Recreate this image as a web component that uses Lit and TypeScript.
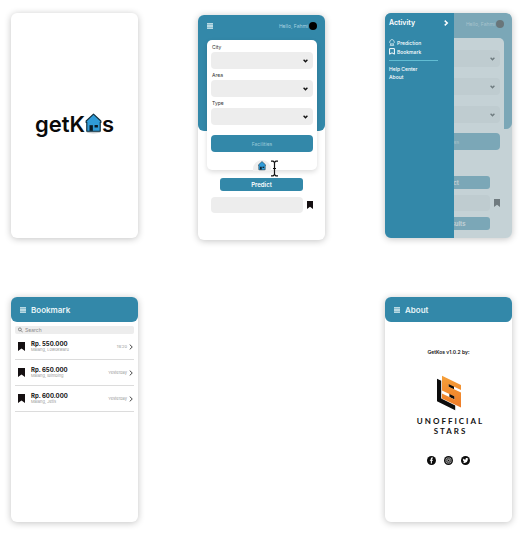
import { LitElement, html, svg, css } from "lit";
import { customElement, property } from "lit/decorators.js";

const base = css`
  :host {
    --blue: #3388a9;
    --field: #ededed;
    font-family: "Inter", "Liberation Sans", sans-serif;
    color: #111;
  }
  * {
    box-sizing: border-box;
  }
  button,
  input,
  select {
    font: inherit;
    border: 0;
    margin: 0;
    padding: 0;
    background: none;
    color: inherit;
    text-align: inherit;
  }
  a {
    color: inherit;
    text-decoration: none;
  }
  svg {
    display: block;
    flex: none;
  }
  h1,
  h2,
  p,
  ul {
    margin: 0;
    padding: 0;
    font-weight: 400;
    list-style: none;
  }
`;

const menuIcon = html`<svg width="6" height="6" viewBox="0 0 6 6" aria-hidden="true">
  <path d="M0 .8H6M0 3H6M0 5.2H6" stroke="#e6f3f6" stroke-width="1.3" />
</svg>`;

const chevron = (size: number, color: string, width: number) => html`<svg
  width=${size} height=${size} viewBox="0 0 8 8" aria-hidden="true">
  <path d="M2.3 .8L5.7 4L2.3 7.2" fill="none" stroke=${color} stroke-width=${width} />
</svg>`;

const bookmark = (w: number, h: number) => html`<svg
  width=${w} height=${h} viewBox="0 0 6 8" preserveAspectRatio="none" aria-hidden="true">
  <path d="M0 0H6V8L3 5.8L0 8Z" fill="#151012" />
</svg>`;

const house = (w: number, h: number) => html`<svg width=${w} height=${h} viewBox="0 0 16 20" aria-hidden="true">
  ${svg`
    <ellipse cx="8" cy="18" rx="6.5" ry="1.6" fill="#c9cdd0" />
    <path d="M1 7.6L8 1L15 7.6V9H14.4V17.4H1.6V9H1Z" fill="#2f9bd8" stroke="#12303f" stroke-width="1.1" stroke-linejoin="round" />
    <path d="M4.2 11.6H7.4V17H4.2Z" fill="#0b1a24" />
    <path d="M9 11.4H12.2V13.8H9Z" fill="#0b1a24" />
  `}
</svg>`;

@customElement("search-form")
export class SearchForm extends LitElement {
  @property({ type: Boolean }) results = false;

  static styles = [
    base,
    css`
      :host {
        display: block;
      }
      .hero {
        background: var(--blue);
        border-radius: 6px;
        height: 116px;
        padding: 6px 8px 0 9px;
      }
      .bar {
        display: flex;
        align-items: center;
        height: 10px;
        margin-bottom: 9px;
      }
      .bar button {
        margin-right: auto;
      }
      .hello {
        font-size: 5px;
        line-height: 8px;
        color: #a9d3e0;
        margin-right: 1px;
      }
      .avatar {
        width: 8px;
        height: 8px;
        border-radius: 50%;
        background: #000;
      }
      .panel {
        background: #fff;
        border-radius: 5px;
        padding: 4px 4px 0;
        height: 130px;
        box-shadow: 0 2px 5px rgba(0, 0, 0, 0.14);
        display: flex;
        flex-direction: column;
      }
      .results .panel {
        box-shadow: none;
      }
      .results label {
        visibility: hidden;
      }
      label {
        font-size: 5px;
        line-height: 6px;
        margin: 0 1px 2px;
        color: #333;
      }
      .pick {
        display: grid;
        margin-bottom: 3px;
      }
      .pick > * {
        grid-area: 1 / 1;
      }
      select {
        appearance: none;
        height: 17px;
        border-radius: 4px;
        background: var(--field);
        width: 100%;
        font-size: 5px;
      }
      .pick svg {
        place-self: center end;
        margin-right: 5px;
        pointer-events: none;
      }
      .facilities {
        flex: none;
        height: 17px;
        margin-top: 7px;
        border-radius: 4px;
        background: var(--blue);
        color: #9ccbd9;
        font-size: 5px;
        text-align: center;
      }
      .home {
        flex: none;
        align-self: center;
        display: grid;
        place-items: end center;
        width: 18px;
        height: 11px;
        margin-top: 8px;
        border-radius: 9px 9px 0 0;
        background: #eee;
      }
      .below {
        display: grid;
        grid-template-columns: 1fr 6px;
        align-items: center;
        gap: 6px 4px;
        padding: 47px 12px 0 13px;
      }
      .action {
        margin-left: 9px;
        height: 13px;
        border-radius: 3px;
        background: var(--blue);
        color: #fff;
        font-size: 6px;
        font-weight: 600;
        text-align: center;
        grid-column: 1;
      }
      .out {
        grid-column: 1;
        height: 16px;
        width: 100%;
        min-width: 0;
        border-radius: 4px;
        background: var(--field);
      }
    `,
  ];

  private field(id: string, label: string) {
    return html`<label for=${id}>${label}</label>
      <div class="pick">
        <select id=${id}></select>
        <svg width="5" height="4" viewBox="0 0 5 4" aria-hidden="true">
          <path d="M.6 .8L2.5 2.7L4.4 .8" fill="none" stroke="#111" stroke-width="1.4" />
        </svg>
      </div>`;
  }

  render() {
    return html`<div class=${this.results ? "results" : ""}>
      <div class="hero">
        <div class="bar">
          <button aria-label="Menu">${menuIcon}</button>
          <span class="hello">Hello, Fahmi</span>
          <span class="avatar"></span>
        </div>
        <div class="panel">
          ${this.field("city", "City")} ${this.field("area", "Area")} ${this.field("type", "Type")}
          <button class="facilities">Facilities</button>
          ${this.results ? "" : html`<button class="home" aria-label="Home">${house(8, 10)}</button>`}
        </div>
      </div>
      <div class="below">
        <button class="action">Predict</button>
        <input class="out" aria-label="Prediction" readonly />
        <button aria-label="Bookmark">${bookmark(6, 8)}</button>
        ${this.results ? html`<button class="action">See Results</button>` : ""}
      </div>
    </div>`;
  }
}

@customElement("activity-drawer")
export class ActivityDrawer extends LitElement {
  static styles = [
    base,
    css`
      :host {
        display: block;
        background: var(--blue);
        color: #fff;
        padding: 5px 4px;
      }
      .head {
        display: flex;
        align-items: center;
        justify-content: space-between;
        height: 10px;
        margin-bottom: 10px;
      }
      .head button {
        margin-right: 1px;
      }
      h2 {
        font-size: 7px;
        line-height: 10px;
        font-weight: 600;
      }
      a {
        display: flex;
        align-items: center;
        gap: 2px;
        font-size: 5px;
        line-height: 8px;
        font-weight: 500;
      }
      .main a {
        height: 9px;
      }
      hr {
        border: 0;
        height: 1px;
        margin: 4px 12px 4px 0;
        background: #62bdd3;
      }
    `,
  ];

  render() {
    return html`<div class="head">
        <h2>Activity</h2>
        <button aria-label="Close">${chevron(6, "#fff", 2)}</button>
      </div>
      <ul class="main">
        <li>
          <a href="#prediction"><svg width="6" height="7" viewBox="0 0 6 7" aria-hidden="true">
            <path d="M2 4.8A2.2 2.2 0 1 1 4 4.8M1.2 6.4H4.8L4.2 5H1.8Z" fill="none" stroke="#d9eef4" stroke-width=".8" />
          </svg>Prediction</a>
        </li>
        <li>
          <a href="#bookmark"><svg width="6" height="7" viewBox="0 0 6 7" aria-hidden="true">
            <path d="M.6 .6H5.4V6.2L3 4.8L.6 6.2Z" fill="none" stroke="#fff" stroke-width="1" />
          </svg>Bookmark</a>
        </li>
      </ul>
      <hr />
      <ul>
        <li><a href="#help">Help Center</a></li>
        <li><a href="#about">About</a></li>
      </ul>`;
  }
}

const saved = [
  { price: "Rp. 550.000", place: "Malang, Lowokwaru", when: "19:20" },
  { price: "Rp. 650.000", place: "Malang, Blimbing", when: "Yesterday" },
  { price: "Rp. 600.000", place: "Malang, Jetis", when: "Yesterday" },
];

@customElement("app-root")
export class AppRoot extends LitElement {
  static styles = [
    base,
    css`
      :host {
        display: block;
        min-height: 100vh;
        background: #fff;
      }
      .board {
        display: grid;
        grid-template-columns: repeat(3, minmax(0, 1fr));
        gap: 57px 60px;
        padding: 13px 10px 12px 11px;
      }
      .screen {
        min-height: 225px;
        border-radius: 6px;
        background: #fff;
        box-shadow: 0 1px 7px rgba(0, 0, 0, 0.24);
        align-self: start;
      }
      .form {
        grid-column: 2;
        margin-top: 2px;
        position: relative;
      }
      .cursor {
        position: absolute;
        left: 72px;
        top: 145px;
      }
      .splash {
        display: flex;
        align-items: center;
        justify-content: center;
        padding-bottom: 4px;
      }
      .brand {
        display: flex;
        align-items: center;
        font-size: 22px;
        line-height: 28px;
        font-weight: 600;
        color: #0a0a0a;
      }
      .layers {
        display: grid;
        grid-template-columns: 54% 1fr;
        overflow: hidden;
      }
      .layers > * {
        grid-row: 1;
      }
      .under,
      .veil {
        grid-column: 1 / 3;
      }
      .veil {
        background: rgba(164, 185, 191, 0.64);
        z-index: 1;
      }
      .drawer {
        grid-column: 1;
        z-index: 2;
      }
      .title {
        display: flex;
        align-items: center;
        gap: 5px;
        height: 25px;
        padding: 0 9px;
        border-radius: 6px;
        background: var(--blue);
        color: #e8f5f8;
      }
      h1 {
        font-size: 8px;
        line-height: 10px;
        font-weight: 600;
      }
      .list {
        grid-column: 1;
      }
      .about {
        grid-column: 3;
      }
      .search {
        display: flex;
        align-items: center;
        gap: 2px;
        height: 8px;
        margin: 4px 4px 0;
        padding: 0 3px;
        border-radius: 2px;
        background: var(--field);
      }
      .search input {
        flex: 1;
        min-width: 0;
        height: 8px;
        font-size: 5px;
        line-height: 8px;
        appearance: none;
      }
      .search input::placeholder {
        color: #8a8a8a;
        opacity: 1;
      }
      .rows {
        padding: 0 4px;
      }
      .row {
        display: flex;
        align-items: center;
        height: 26px;
        padding: 0 0 0 3px;
        border-bottom: 1px solid #dcdcdc;
      }
      .info {
        flex: 1;
        margin-left: 6px;
      }
      .price {
        font-size: 6px;
        line-height: 6px;
        font-weight: 700;
      }
      .place,
      .when {
        font-size: 4px;
        line-height: 5px;
        color: #999;
      }
      .when {
        margin-right: 1px;
      }
      .credits {
        display: flex;
        flex-direction: column;
        align-items: center;
        padding-top: 26px;
        text-align: center;
      }
      .version {
        font-size: 5px;
        line-height: 8px;
        font-weight: 600;
        margin-bottom: 19px;
      }
      .team {
        font-family: "Lato", "Inter", sans-serif;
        font-size: 8px;
        line-height: 10px;
        font-weight: 700;
        letter-spacing: 2px;
        padding-left: 4px;
        margin: 5px 0 20px;
      }
      .social {
        display: flex;
        gap: 8px;
      }
    `,
  ];

  private title(text: string) {
    return html`<header class="title">
      <button aria-label="Menu">${menuIcon}</button>
      <h1>${text}</h1>
    </header>`;
  }

  render() {
    return html`<main class="board">
      <section class="screen splash">
        <div class="brand">getK${house(17, 21)}s</div>
      </section>

      <section class="screen form">
        <search-form></search-form>
        <svg class="cursor" width="9" height="17" viewBox="0 0 9 17" aria-hidden="true">
          <path d="M1 1.2H3.2L4.5 2.4L5.8 1.2H8M4.5 2.2V14.8M1 15.8H3.2L4.5 14.6L5.8 15.8H8M3 8.5H6" fill="none" stroke="#111" stroke-width="1.2" />
        </svg>
      </section>

      <section class="screen layers">
        <search-form class="under" results inert></search-form>
        <div class="veil"></div>
        <activity-drawer class="drawer"></activity-drawer>
      </section>

      <section class="screen list">
        ${this.title("Bookmark")}
        <div class="search">
          <svg width="5" height="6" viewBox="0 0 5 6" aria-hidden="true">
            <path d="M3.4 2.4A1.5 1.5 0 1 1 .4 2.4A1.5 1.5 0 1 1 3.4 2.4M3 3.6L4.8 5.4" fill="none" stroke="#666" stroke-width=".7" />
          </svg>
          <input type="search" aria-label="Search" placeholder="Search" />
        </div>
        <ul class="rows">
          ${saved.map(
            (s) => html`<li class="row">
              ${bookmark(7, 9)}
              <div class="info">
                <p class="price">${s.price}</p>
                <p class="place">${s.place}</p>
              </div>
              <span class="when">${s.when}</span>
              ${chevron(6, "#444", 1.3)}
            </li>`
          )}
        </ul>
      </section>

      <section class="screen about">
        ${this.title("About")}
        <div class="credits">
          <p class="version">GetKos v1.0.2 by:</p>
          <svg width="26" height="36" viewBox="0 0 26 36" role="img" aria-label="Unofficial Stars logo">
            <defs>
              <linearGradient id="amber" x1="0" y1="0" x2="0" y2="1">
                <stop offset="0" stop-color="#f5a03a" />
                <stop offset="1" stop-color="#ee7a26" />
              </linearGradient>
            </defs>
            <path d="M1 3.8L5.2 5.8V23.6L19.2 30.4V35.2L1 26.2Z" fill="#0c0c0c" />
            <path d="M12.4 8L18 10.6V14.6L12.4 12Z M13.4 18L18.6 20.4V24.6L13.4 22Z" fill="#0c0c0c" />
            <path d="M6 .8L25 10V15L12.4 9V11.6L25 17.6V32.6L6 23.4V18.6L18.6 24.6V21.4L6 15.4Z" fill="url(#amber)" />
          </svg>
          <p class="team">UNOFFICIAL<br />STARS</p>
          <nav class="social">
            <a href="#facebook" aria-label="Facebook"><svg width="9" height="9" viewBox="0 0 18 18">
              <circle cx="9" cy="9" r="9" fill="#0c0c0c" />
              <path d="M9.8 15V9.6H11.7L12 7.4H9.8V6.2C9.8 5.5 10.1 5.1 11 5.1H12V3.2C11.7 3.1 11.1 3 10.4 3C8.7 3 7.6 4 7.6 5.8V7.4H5.8V9.6H7.6V15Z" fill="#fff" />
            </svg></a>
            <a href="#instagram" aria-label="Instagram"><svg width="9" height="9" viewBox="0 0 18 18">
              <circle cx="9" cy="9" r="9" fill="#0c0c0c" />
              <rect x="4" y="4" width="10" height="10" rx="3" fill="none" stroke="#fff" stroke-width="1.3" />
              <circle cx="9" cy="9" r="2.4" fill="none" stroke="#fff" stroke-width="1.3" />
              <circle cx="11.9" cy="6.1" r=".8" fill="#fff" />
            </svg></a>
            <a href="#twitter" aria-label="Twitter"><svg width="9" height="9" viewBox="0 0 18 18">
              <circle cx="9" cy="9" r="9" fill="#0c0c0c" />
              <path d="M14.6 6L13.4 7.1C13.5 11 10.6 13.8 7.2 13.8C5.8 13.8 4.5 13.4 3.5 12.7C4.8 12.8 5.9 12.5 6.8 11.8C5.7 11.7 5 11.1 4.7 10.2H5.6C4.5 9.8 3.8 8.9 3.8 7.8L4.7 8.1C3.7 7.3 3.4 6 4 4.9C5.3 6.4 7 7.2 9 7.3C8.6 5.4 9.8 4.1 11.4 4.1C12.1 4.1 12.7 4.4 13.2 4.9L14.6 4.4L13.9 5.6Z" fill="#fff" />
            </svg></a>
          </nav>
        </div>
      </section>
    </main>`;
  }
}
